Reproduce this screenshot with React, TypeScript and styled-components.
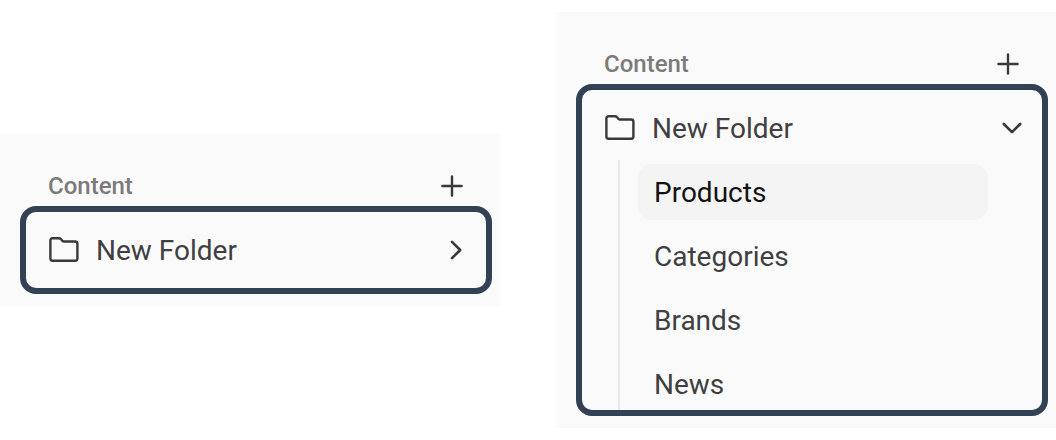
import React, { useState } from "react";
import styled, { createGlobalStyle } from "styled-components";

const GlobalStyle = createGlobalStyle`
  *, *::before, *::after { box-sizing: border-box; }
  body {
    margin: 0;
    background: #ffffff;
    color: #404042;
    font-family: Roboto, "Liberation Sans", sans-serif;
    font-size: 28px;
    line-height: 32px;
  }
  button { font: inherit; color: inherit; }
`;

const Page = styled.main`
  display: grid;
  grid-template-columns: 1fr 1fr;
  gap: 56px;
  align-items: center;
  min-height: 100vh;
`;

const Panel = styled.section`
  padding: 36px 8px 12px 20px;
  background: #fafafa;
`;

const Header = styled.header`
  display: flex;
  align-items: center;
  justify-content: space-between;
  height: 32px;
  margin-bottom: 4px;
  padding: 0 24px 0 28px;
`;

const Title = styled.h2`
  margin: 0;
  color: #7b7b7b;
  font-size: 24px;
  font-weight: 500;
`;

const IconButton = styled.button`
  display: flex;
  padding: 0;
  border: 0;
  background: none;
  cursor: pointer;
`;

const Frame = styled.div<{ $open: boolean }>`
  padding: ${({ $open }) => ($open ? "10px 0 0" : "10px 0")};
  border: 6px solid #334155;
  border-radius: 16px;
  overflow: hidden;
`;

const FolderRow = styled.button`
  display: flex;
  align-items: center;
  width: 100%;
  height: 56px;
  padding: 0 14px 0 22px;
  border: 0;
  background: none;
  text-align: left;
  cursor: pointer;
`;

const FolderName = styled.span`
  flex: 1;
  margin-left: 16px;
  padding-top: 2px;
`;

const Tree = styled.ul`
  display: flex;
  flex-direction: column;
  gap: 8px;
  margin: 4px 54px -2px 36px;
  padding: 4px 0 0 18px;
  border-left: 2px solid #e9e9ea;
  list-style: none;
`;

const TreeLink = styled.a<{ $active: boolean }>`
  display: block;
  padding: 13px 16px 11px;
  border-radius: 14px;
  background: ${({ $active }) => ($active ? "#f4f4f4" : "transparent")};
  color: ${({ $active }) => ($active ? "#131314" : "#404042")};
  text-decoration: none;
`;

const Icon = styled.svg`
  display: block;
  flex: none;
  fill: none;
  stroke: #38393c;
  stroke-linecap: round;
  stroke-linejoin: round;
`;

const PlusIcon = () => (
  <Icon width="32" height="32" viewBox="0 0 32 32" strokeWidth="2.4" aria-hidden="true">
    <path d="M16 6.4v19.2M6.4 16h19.2" />
  </Icon>
);

const FolderIcon = () => (
  <Icon width="32" height="32" viewBox="0 0 32 32" strokeWidth="2.4" aria-hidden="true">
    <path d="M2.4 6.2a2 2 0 0 1 2-2h6.4a3 3 0 0 1 2.3 1l1.4 1.7a2 2 0 0 0 1.5.6h11.2a2.2 2.2 0 0 1 2.2 2.2v14.9a2.2 2.2 0 0 1-2.2 2.2H4.6a2.2 2.2 0 0 1-2.2-2.2z" />
  </Icon>
);

const ChevronIcon = ({ open }: { open: boolean }) => (
  <Icon width="32" height="32" viewBox="0 0 32 32" strokeWidth="2.6" aria-hidden="true">
    <path d={open ? "M7.8 12l8.2 8.2 8.2-8.2" : "M12 7.8l8.2 8.2-8.2 8.2"} />
  </Icon>
);

const items = ["Products", "Categories", "Brands", "News"];

const ContentPanel = ({ defaultOpen = false }: { defaultOpen?: boolean }) => {
  const [open, setOpen] = useState(defaultOpen);
  const [active, setActive] = useState("Products");

  return (
    <Panel>
      <Header>
        <Title>Content</Title>
        <IconButton type="button" aria-label="Add content">
          <PlusIcon />
        </IconButton>
      </Header>
      <Frame $open={open}>
        <FolderRow type="button" aria-expanded={open} onClick={() => setOpen(!open)}>
          <FolderIcon />
          <FolderName>New Folder</FolderName>
          <ChevronIcon open={open} />
        </FolderRow>
        {open && (
          <Tree>
            {items.map((item) => (
              <li key={item}>
                <TreeLink
                  href={`#${item.toLowerCase()}`}
                  $active={item === active}
                  onClick={() => setActive(item)}
                >
                  {item}
                </TreeLink>
              </li>
            ))}
          </Tree>
        )}
      </Frame>
    </Panel>
  );
};

export default function App() {
  return (
    <>
      <GlobalStyle />
      <Page>
        <ContentPanel />
        <ContentPanel defaultOpen />
      </Page>
    </>
  );
}
